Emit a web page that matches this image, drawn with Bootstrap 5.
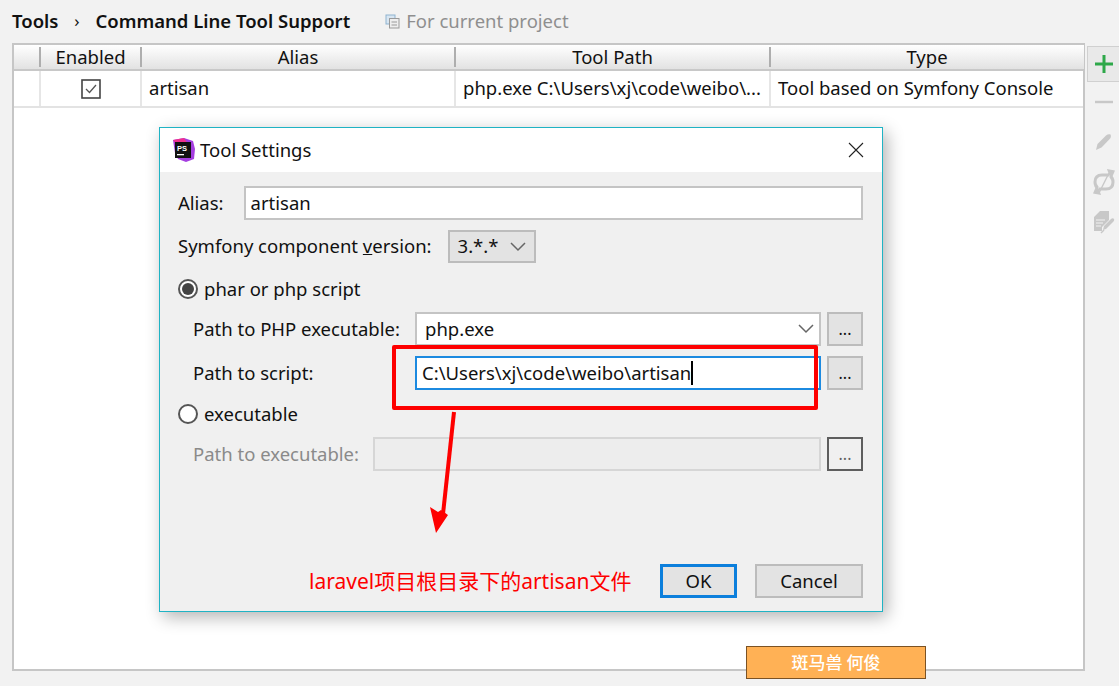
<!DOCTYPE html>
<html lang="en">
<head>
<meta charset="utf-8">
<title>Command Line Tool Support</title>
<link href="https://cdn.jsdelivr.net/npm/bootstrap@5.3.0/dist/css/bootstrap.min.css" rel="stylesheet">
<style>
html,body{height:100%;}
body{width:1119px;height:686px;overflow:hidden;background:#f2f2f2;color:#111;font-family:"Noto Sans","Liberation Sans",sans-serif;font-size:18.5px;line-height:1.2;position:relative;}
.crumbs{height:43px;padding-left:12px;}
.crumbs b{font-weight:600;}
.crumb-sep{width:37px;text-align:center;font-size:17px;}
.crumb-scope{color:#8f8f8f;margin-left:35px;gap:6px;}
.main-area{height:628px;}
.tool-panel{width:1071px;margin-left:12px;background:#fff;border:2px solid #c6c6c6;border-right:0;}
.side-bar{width:36px;border-left:2px solid #c6c6c6;padding-top:3px;gap:0;}
.tool-table{table-layout:fixed;width:1070px;border-collapse:collapse;margin:0;}
.tool-table th{height:25px;padding:0;font-weight:400;text-align:center;background:linear-gradient(#fff,#e2e2e2);border-bottom:2px solid #c8c8c8;position:relative;}
.tool-table th+th::before{content:"";position:absolute;left:-1px;top:2px;bottom:2px;width:2px;background:#aeaeae;}
.tool-table td{height:37px;padding:0 7px;background:#fff;border-bottom:2px solid #e3e3e3;white-space:nowrap;overflow:hidden;}
.tool-table td+td{border-left:2px solid #e6e6e6;}
.c1{width:26px;}.c2{width:101px;}.c3{width:314px;}.c4{width:315px;}
.chk{width:20px;height:20px;display:block;margin:auto;}
.dlg{position:absolute;left:159px;top:127px;width:724px;height:485px;background:#f0f0f0;border:1px solid #1fb3c4;box-shadow:4px 5px 16px rgba(0,0,0,.3);}
.dlg-title{height:44px;background:#fff;padding-left:11px;gap:5px;}
.dlg-x{margin-left:auto;margin-right:17px;width:18px;height:18px;}
.dlg-body{padding:14px 19px 0 18px;}
.fld{background:#fff;border:2px solid #c4c4c4;border-radius:0;height:34px;padding:0 5px;font:inherit;color:#111;box-shadow:none;}
.rw{height:34px;}
.w-alias{margin-left:20px;width:624px;padding-left:5px;}
.rw-sym{margin-top:10px;height:33px;}
.sym-sel{margin-left:16px;width:88px;height:33px;background:#e3e3e3;border:2px solid #bcbcbc;padding:0 8px;}
.u-key{text-decoration:underline;}
.rad-row{height:26px;gap:6px;}
.rad{width:20px;height:20px;border-radius:50%;border:2px solid #555;background:#fff;flex:none;display:flex;align-items:center;justify-content:center;}
.rad i{display:block;width:12px;height:12px;border-radius:50%;background:#444;}
.mt-r1{margin-top:13px;}
.sub-rw{padding-left:15px;margin-top:10px;}
.sub-lbl{width:222px;flex:none;}
.sub-lbl-d{width:180px;flex:none;color:#8a8a8a;}
.mt-p1{margin-top:11px;}
.fld-w{width:406px;flex:none;padding-left:8px;}
.fld-act{border-color:#1c8ae0;padding-left:5px;}
.fld-d{width:448px;flex:none;background:#ededed;border-color:#d6d6d6;}
.caret-bar{display:inline-block;width:2px;height:24px;background:#000;}
.dots{width:36px;height:34px;margin-left:6px;padding:0;background:#e3e3e3;border:2px solid #bcbcbc;border-radius:0;color:#111;font:inherit;font-size:16px;line-height:1;}
.dots-d{background:#efefef;border-color:#d8d8d8;color:#b5b5b5;}
.dlg-foot{position:absolute;right:19px;bottom:13px;}
.bt{height:34px;padding:0;background:#e3e3e3;border:2px solid #bcbcbc;border-radius:0;color:#111;font:inherit;}
.bt-ok{width:77px;border:3px solid #0c7fdc;margin-right:18px;}
.bt-no{width:108px;}
.tb-add{width:33px;height:36px;margin-left:2px;background:#e9e9e9;border:1px solid #d0d0d0;border-right:0;}
.tb-i{width:33px;height:40px;margin-left:2px;}
.anno-box{position:absolute;left:392px;top:345px;width:426px;height:65px;border:4px solid #fe0000;border-radius:2px;}
.anno-arrow{position:absolute;left:425px;top:410px;width:36px;height:126px;}
.anno-text{position:absolute;left:309px;top:566px;color:#fe0000;font-family:"Noto Sans","Noto Sans CJK SC",sans-serif;font-size:21px;line-height:30px;white-space:nowrap;}
.stamp{position:absolute;left:746px;top:646px;width:180px;height:33px;background:#ffb155;border:1px solid #7b5224;color:#fff;font-family:"Noto Sans CJK SC",sans-serif;font-size:17px;font-weight:500;}
</style>
</head>
<body>
<div class="crumbs d-flex align-items-center">
  <b>Tools</b><span class="crumb-sep">›</span><b>Command Line Tool Support</b>
  <span class="crumb-scope d-flex align-items-center">
    <svg width="15" height="15" viewBox="0 0 15 15"><rect x="1" y="1" width="9" height="9" fill="#d8e6f2" stroke="#8fb3d0"/><rect x="4.5" y="4.5" width="9.5" height="9.5" fill="#eee" stroke="#9a9a9a"/><path d="M6.5 8h5.5M6.5 11h5.5" stroke="#9a9a9a"/></svg>
    For current project
  </span>
</div>
<div class="main-area d-flex">
  <div class="tool-panel">
    <table class="tool-table">
      <colgroup><col class="c1"><col class="c2"><col class="c3"><col class="c4"><col></colgroup>
      <thead><tr><th></th><th>Enabled</th><th>Alias</th><th>Tool Path</th><th>Type</th></tr></thead>
      <tbody><tr>
        <td></td>
        <td><svg class="chk" viewBox="0 0 20 20"><rect x="1" y="1" width="18" height="18" fill="#fff" stroke="#444" stroke-width="1.6"/><path d="M5 10l3.5 3.5L15 6" fill="none" stroke="#555" stroke-width="1.3"/></svg></td>
        <td>artisan</td>
        <td>php.exe C:\Users\xj\code\weibo\...</td>
        <td>Tool based on Symfony Console</td>
      </tr></tbody>
    </table>
  </div>
  <div class="side-bar d-flex flex-column">
    <div class="tb-add d-flex align-items-center justify-content-center">
      <svg width="20" height="20" viewBox="0 0 20 20"><path d="M10 1v18M1 10h18" stroke="#2ea84a" stroke-width="3"/></svg>
    </div>
    <div class="tb-i d-flex align-items-center justify-content-center">
      <svg width="20" height="4" viewBox="0 0 20 4"><path d="M1 2h18" stroke="#c8c8c8" stroke-width="2.4"/></svg>
    </div>
    <div class="tb-i d-flex align-items-center justify-content-center">
      <svg width="20" height="20" viewBox="0 0 20 20"><path d="M2 18l1.5-6L12 3.5c1.5-1.3 3-1.5 4.5-1 .8 1.5.5 3-.8 4.5L7.5 15.5z" fill="#c8c8c8"/></svg>
    </div>
    <div class="tb-i d-flex align-items-center justify-content-center">
      <svg width="24" height="26" viewBox="0 0 24 26"><path d="M17 6H10C5 6 3 9 3 13c0 3 1 5 3 6" fill="none" stroke="#c8c8c8" stroke-width="3"/><path d="M7 20h7c5 0 7-3 7-7 0-3-1-5-3-6" fill="none" stroke="#c8c8c8" stroke-width="3"/><path d="M16 1l6 1-3 7zM8 25l-6-1 3-7zM18 2L7 24" fill="#c8c8c8" stroke="#c8c8c8" stroke-width="1.4"/></svg>
    </div>
    <div class="tb-i d-flex align-items-center justify-content-center">
      <svg width="22" height="24" viewBox="0 0 22 24"><path d="M7 1h9v9l-7 7v4H1V7z" fill="#c8c8c8"/><path d="M3 10h9M3 13h7M3 16h5" stroke="#f2f2f2"/><path d="M10 20l1-4 7-7c1-1 2.500-1 3 0s0 2-1 3l-7 7z" fill="#c8c8c8"/><path d="M8 23l3-3" stroke="#c8c8c8" stroke-width="1.500"/></svg>
    </div>
  </div>
</div>

<div class="dlg">
  <div class="dlg-title d-flex align-items-center">
    <svg width="24" height="24" viewBox="0 0 24 24"><path d="M2 2l11-2 9 3 2 8-1 10-8 3-8-3-3-6z" fill="#a53ee0"/><path d="M2 2l11-2 4 6-9 3z" fill="#f0308f"/><rect x="4" y="4" width="16" height="16" fill="#111"/><text x="6" y="12.500" fill="#fff" font-size="7.500" font-weight="700" font-family="Liberation Sans">PS</text><rect x="6" y="16" width="7" height="1.300" fill="#fff"/></svg>
    <span>Tool Settings</span>
    <svg class="dlg-x" viewBox="0 0 18 18"><path d="M2 2l14 14M16 2L2 16" stroke="#222" stroke-width="1.100"/></svg>
  </div>
  <div class="dlg-body">
    <div class="rw d-flex align-items-center">
      <span>Alias:</span>
      <div class="fld w-alias d-flex align-items-center">artisan</div>
    </div>
    <div class="rw-sym d-flex align-items-center">
      <span>Symfony component <span class="u-key">v</span>ersion:</span>
      <div class="sym-sel d-flex align-items-center justify-content-between">3.*.*
        <svg width="16" height="10" viewBox="0 0 16 10"><path d="M1 1l7 7 7-7" fill="none" stroke="#666" stroke-width="1.500"/></svg>
      </div>
    </div>
    <div class="rad-row mt-r1 d-flex align-items-center"><span class="rad"><i></i></span><span>phar or php script</span></div>
    <div class="rw sub-rw d-flex align-items-center">
      <span class="sub-lbl">Path to PHP executable:</span>
      <div class="fld fld-w d-flex align-items-center justify-content-between">php.exe
        <svg width="16" height="10" viewBox="0 0 16 10"><path d="M1 1l7 7 7-7" fill="none" stroke="#666" stroke-width="1.500"/></svg>
      </div>
      <button class="btn dots" type="button">...</button>
    </div>
    <div class="rw sub-rw d-flex align-items-center">
      <span class="sub-lbl">Path to script:</span>
      <div class="fld fld-w fld-act d-flex align-items-center"><span>C:\Users\xj\code\weibo\artisan</span><span class="caret-bar"></span></div>
      <button class="btn dots" type="button">...</button>
    </div>
    <div class="rad-row mt-p1 d-flex align-items-center"><span class="rad"></span><span>executable</span></div>
    <div class="rw sub-rw d-flex align-items-center">
      <span class="sub-lbl-d">Path to executable:</span>
      <div class="fld fld-d"></div>
      <button class="btn dots dots-d" type="button" disabled>...</button>
    </div>
  </div>
  <div class="dlg-foot d-flex">
    <button class="btn bt bt-ok" type="button">OK</button>
    <button class="btn bt bt-no" type="button">Cancel</button>
  </div>
</div>

<div class="anno-box"></div>
<svg class="anno-arrow" viewBox="0 0 36 126"><path d="M29 2l-11 102" stroke="#fe0000" stroke-width="4" fill="none"/><path d="M11 123l-6-26 8 5 3-2 7 5z" fill="#fe0000"/></svg>
<div class="anno-text">laravel项目根目录下的artisan文件</div>
<div class="stamp d-flex align-items-center justify-content-center">斑马兽 何俊</div>
<script src="https://cdn.jsdelivr.net/npm/bootstrap@5.3.0/dist/js/bootstrap.bundle.min.js"></script>
</body>
</html>
